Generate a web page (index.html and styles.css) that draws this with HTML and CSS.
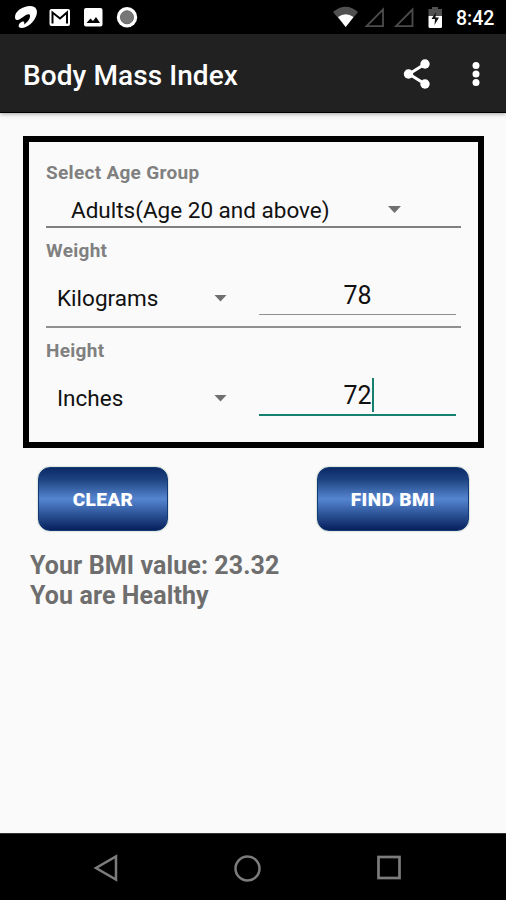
FILE: index.html
```html
<!DOCTYPE html>
<html lang="en">
<head>
<meta charset="utf-8">
<title>Body Mass Index</title>
<link rel="stylesheet" href="styles.css">
</head>
<body>
<div class="screen">
  <header class="status">
    <svg class="status-left" width="150" height="34" viewBox="0 0 150 34">
      <path fill="#fff" d="M15 17C15 11 23 6 30 6C36 6 38 10 36.500 15C34.500 22 27 28 21.500 28C18 28 18 25 20 23C22 21 25.500 20.500 24 24.500C28 22 31.500 17 29.500 14.500C27 12.500 21 19.500 17.500 20C15.500 20.500 15 18.500 15 17Z"/>
      <rect x="49.500" y="9" width="20.500" height="17" rx="2" fill="#fff"/>
      <path d="M52.500 23.500V12.500L60 18.500L67 12.500V23.500" fill="none" stroke="#000" stroke-width="2"/>
      <rect x="84" y="8" width="18.500" height="18.500" rx="2" fill="#fff"/>
      <path d="M86.500 23L90.500 18.500L93 21L96 17L100 23Z" fill="#000"/>
      <circle cx="127" cy="17.300" r="10.200" fill="#fff"/>
      <circle cx="127" cy="17.300" r="6.500" fill="#777" stroke="#666"/>
    </svg>
    <div class="status-right">
      <svg width="117" height="34" viewBox="0 0 117 34">
        <path d="M0 12Q12.500 1.500 25 12L12.700 27Z" fill="#505050"/>
        <path d="M5 17Q12.700 11.500 20.500 17L12.700 27Z" fill="#fff"/>
        <path d="M33.500 26.200L50 9.500V26.200ZM63 26.200L79.500 9.500V26.200Z" fill="none" stroke="#4c4c4c" stroke-width="1.800"/>
        <path d="M95.500 9H99V7H105V9H109V16H95.500Z" fill="#505050"/>
        <path d="M95.500 16H109V26.500Q109 28 107.500 28H97Q95.500 28 95.500 26.500Z" fill="#fff"/>
        <path d="M103 12L98.500 19H102L101.500 25L106 17.500H102.500Z" fill="#111"/>
      </svg>
      <span class="clock">8:42</span>
    </div>
  </header>
  <div class="appbar">
    <h1>Body Mass Index</h1>
    <div class="actions">
      <svg width="30" height="34" viewBox="0 0 30 34">
        <path d="M23 7L7 17L23 27" fill="none" stroke="#fff" stroke-width="3"/>
        <circle cx="23" cy="7" r="4.700" fill="#fff"/><circle cx="6.500" cy="17" r="4.700" fill="#fff"/><circle cx="23" cy="27" r="4.700" fill="#fff"/>
      </svg>
      <svg width="10" height="34" viewBox="0 0 10 34">
        <circle cx="5" cy="8.500" r="3.500" fill="#fff"/><circle cx="5" cy="17" r="3.500" fill="#fff"/><circle cx="5" cy="25.500" r="3.500" fill="#fff"/>
      </svg>
    </div>
  </div>
  <main>
    <section class="card">
      <div class="label label-age">Select Age Group</div>
      <div class="age"><span class="age-text">Adults(Age 20 and above)</span><i class="caret"></i></div>
      <div class="label">Weight</div>
      <div class="row">
        <div class="unit"><span class="kg">Kilograms</span><i class="caret"></i></div>
        <div class="value">78</div>
      </div>
      <div class="label">Height</div>
      <div class="row last">
        <div class="unit"><span class="inch">Inches</span><i class="caret"></i></div>
        <div class="value focused"><span class="typed">72<i class="cursor"></i></span></div>
      </div>
    </section>
    <div class="buttons">
      <button class="clear"><span>CLEAR</span></button>
      <button class="find"><span>FIND BMI</span></button>
    </div>
    <div class="result"><div class="bmi">Your BMI value: 23.32</div><div class="verdict">You are Healthy</div></div>
  </main>
  <nav class="navbar">
    <svg width="26" height="30" viewBox="0 0 26 30"><path d="M23 3.500V26.500L3 15Z" fill="none" stroke="#7c7c7c" stroke-width="2.500"/></svg>
    <svg width="30" height="30" viewBox="0 0 30 30"><circle cx="14.500" cy="15.500" r="12" fill="none" stroke="#7c7c7c" stroke-width="2.500"/></svg>
    <svg width="26" height="30" viewBox="0 0 26 30"><rect x="2.500" y="4" width="21" height="21" fill="none" stroke="#7c7c7c" stroke-width="2.700"/></svg>
  </nav>
</div>
</body>
</html>
```
FILE: styles.css
```css
* { box-sizing: border-box; }
body { margin: 0; font-family: Roboto, "Liberation Sans", sans-serif; color: #111; }
.screen { width: 506px; height: 900px; display: flex; flex-direction: column; background: #fafafa; overflow: hidden; }
.status { height: 34px; background: #000; display: flex; justify-content: space-between; }
.status svg { display: block; }
.status-right { display: flex; width: 173px; }
.clock { margin-left: 6px; font-size: 19.5px; font-weight: 500; line-height: 37px; color: #fff; }
.appbar { height: 79px; background: #212121; border-bottom: 1px solid #000; box-shadow: 0 1px 4px rgba(0,0,0,.35); display: flex; justify-content: space-between; align-items: center; padding: 0 25px 0 23px; }
h1 { margin: 5px 0 0; color: #fff; font-size: 28px; letter-spacing: .08px; font-weight: 500; line-height: 36px; white-space: nowrap; }
.actions { display: flex; gap: 39px; margin-top: 1px; }
main { flex: 1; padding: 23px 22px 0 23px; }
.card { height: 312px; border: 6px solid #000; padding: 21px 17px 0; }
.label { height: 20px; line-height: 20px; font-size: 19px; font-weight: 700; letter-spacing: .3px; color: #808080; margin-top: 13px; white-space: nowrap; }
.label-age { margin-top: 0; }
.age { height: 35px; margin-top: 10px; border-bottom: 2px solid #808080; display: flex; align-items: center; white-space: nowrap; }
.age-text { width: 342px; padding-left: 25px; font-size: 22.5px; }
.caret { width: 13px; height: 7px; background: #707070; clip-path: polygon(0 0, 100% 0, 50% 100%); }
.row { height: 67px; border-bottom: 2.5px solid #909090; display: flex; align-items: flex-start; justify-content: space-between; padding-right: 5px; }
.row.last { border: 0; }
.unit { width: 181px; height: 32px; margin-top: 21px; padding-left: 11px; display: flex; align-items: center; justify-content: space-between; font-size: 22.5px; }
.value { width: 197px; height: 54px; border-bottom: 1px solid #909090; padding-top: 19px; line-height: 31px; font-size: 25px; text-align: center; }
.value.focused { height: 55px; border-bottom: 2px solid #16806f; }
.typed { position: relative; }
.cursor { position: absolute; right: -2px; top: -3px; width: 2px; height: 34px; background: #16806f; }
.buttons { display: flex; justify-content: space-between; padding: 19px 15px 0; }
button { height: 64px; padding: 0; border: 1px solid #123a75; border-radius: 12px; background: linear-gradient(#0b2a66, #1d427f 18%, #5585d0 50%, #24498b 80%, #071f5c); font-family: inherit; font-size: 19px; font-weight: 900; letter-spacing: .4px; color: #fff; box-shadow: 0 0 2px #9bb59b; white-space: nowrap; }
.clear { width: 130px; }
.find { width: 152px; }
.result { padding: 20px 0 0 7px; font-size: 25px; font-weight: 700; letter-spacing: .1px; line-height: 29.5px; color: #6e6e6e; white-space: nowrap; }
.navbar { height: 67px; background: #000; border-top: 1px solid #333; display: flex; justify-content: space-between; align-items: center; padding: 2px 104px 0 93px; }
```
